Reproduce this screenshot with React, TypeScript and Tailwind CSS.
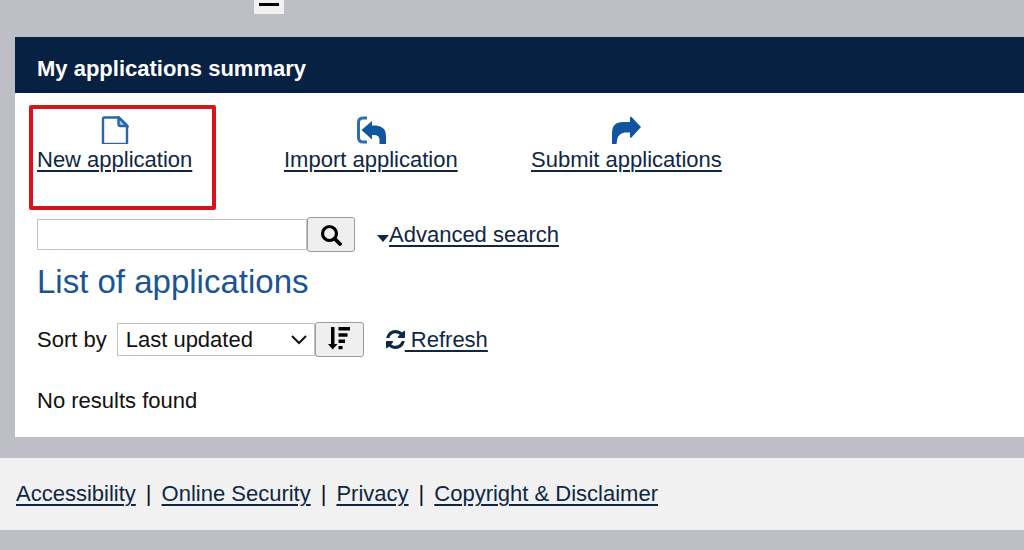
import React from 'react';

const linkClass = 'text-[#0f2744] underline decoration-2 underline-offset-[3px]';

const PageIcon = () => (
  <svg viewBox="0 0 28 28" className="h-7 w-7" fill="none" stroke="#2766ad" strokeWidth="2.4" aria-hidden="true">
    <path d="M2 28V3Q2 1.500 3.500 1.500H18L26 9.500V28" />
    <path d="M17.500 1.500V8Q17.500 10 19.500 10H26Z" fill="#a9cbe8" />
    <path d="M1 27.400H27" strokeWidth="1.200" />
  </svg>
);

const ImportIcon = () => (
  <svg viewBox="0 0 30 28" className="h-7 w-[30px]" aria-hidden="true">
    <path d="M11 2H7Q2.500 2 2.500 6.500V21.500Q2.500 26 7 26H11" fill="none" stroke="#2f6db2" strokeWidth="3" />
    <path d="M5.500 14L16 5V9.500H20Q30 10.500 30 20V28H23.500V24Q23.500 19 18 19H16V23.500Z" fill="#0f559f" />
  </svg>
);

const SubmitIcon = () => (
  <svg viewBox="0 0 30 28" className="h-7 w-[30px]" aria-hidden="true">
    <path d="M30 11L20.500 1Q19 0 19 2V6H12Q1 6 1 17V28H5.500Q6 17 14 16.500H19V20.500Q19 22.500 20.500 21.500Z" fill="#0f559f" />
  </svg>
);

const SearchIcon = () => (
  <svg viewBox="0 0 22 22" className="h-[22px] w-[22px]" fill="none" stroke="#000" strokeWidth="3.200" aria-hidden="true">
    <circle cx="9.500" cy="9.500" r="7" />
    <path d="M14.500 14.500L20 20" strokeWidth="3.800" strokeLinecap="round" />
  </svg>
);

const RefreshIcon = () => (
  <svg viewBox="0 0 1536 1536" className="inline h-[19px] w-[19px] align-[-2px]" fill="currentColor" aria-hidden="true">
    <path d="M1511 928q0 5-1 7-64 268-268 434.500t-478 166.500q-146 0-282.500-55t-243.500-157l-129 129q-19 19-45 19t-45-19-19-45v-448q0-26 19-45t45-19h448q26 0 45 19t19 45-19 45l-137 137q71 66 161 102t187 36q134 0 250-65t186-179q11-17 53-117 8-23 30-23h192q13 0 22.500 9.500t9.500 22.500zm25-800v448q0 26-19 45t-45 19h-448q-26 0-45-19t-19-45 19-45l138-138q-148-137-349-137-134 0-250 65t-186 179q-11 17-53 117-8 23-30 23h-199q-13 0-22.500-9.500t-9.500-22.500v-7q65-268 270-434.500t480-166.500q146 0 284 55.500t245 156.500l130-129q19-19 45-19t45 19 19 45z" />
  </svg>
);

const SortIcon = () => (
  <svg viewBox="0 0 24 24" className="mb-1 h-6 w-6" aria-hidden="true">
    <path d="M4 1H7.500V18H10.500L5.700 23.500L1 18H4ZM11.500 1H23V4.500H11.500ZM11.500 7.300H20.500V10.800H11.500ZM11.500 13.600H18V17H11.500ZM11.500 20H15.500V23.300H11.500Z" />
  </svg>
);

const actions = [
  { label: 'New application', icon: <PageIcon />, highlighted: true },
  { label: 'Import application', icon: <ImportIcon /> },
  { label: 'Submit applications', icon: <SubmitIcon /> },
];

const footerLinks = ['Accessibility', 'Online Security', 'Privacy', 'Copyright & Disclaimer'];

const App = () => {
  return (
    <div className="min-h-screen bg-[#bebec6] font-['Liberation_Sans',Arial,sans-serif] text-[22px] leading-7 text-[#111]">
      <div className="h-[37px] pl-[254px]">
        <button type="button" aria-label="Menu" className="flex h-3.5 w-[30px] justify-center bg-[#f1f1f1] pt-[3px]">
          <span className="h-[3px] w-5 bg-black" />
        </button>
      </div>

      <main className="ml-[15px] bg-white pb-[22px]">
        <h1 className="bg-[#072142] px-[22px] pt-[18px] pb-2.5 font-bold text-white">My applications summary</h1>

        <div className="px-[22px]">
          <nav className="flex pt-[23px]">
            {actions.map((action) => (
              <div key={action.label} className="relative w-[247px]">
                <a href="#" className={`inline-flex flex-col items-center whitespace-nowrap ${linkClass}`}>
                  {action.icon}
                  <span className="leading-8">{action.label}</span>
                </a>
                {action.highlighted && (
                  <span className="pointer-events-none absolute -top-[11px] -left-2 h-[105px] w-[187px] rounded-xs border-4 border-[#d8141b]" />
                )}
              </div>
            ))}
          </nav>

          <form className="mt-[41px] flex items-center" onSubmit={(e) => e.preventDefault()}>
            <input type="text" aria-label="Search applications" className="h-[31px] w-[270px] border border-[#c4c4c4] px-2 outline-none" />
            <button type="submit" aria-label="Search" className="flex h-[35px] w-12 items-center justify-center rounded-[3px] border border-[#9a9a9a] bg-[#efefef]">
              <SearchIcon />
            </button>
            <a href="#" className="ml-[22px] flex items-center text-[#0f2744]">
              <svg viewBox="0 0 12 7" className="mt-2 h-[7px] w-3" fill="#0f2744" aria-hidden="true">
                <path d="M0 0H12L6 7Z" />
              </svg>
              <span className={linkClass}>Advanced search</span>
            </a>
          </form>

          <h2 className="mt-2.5 text-[33px] leading-10 text-[#1a5494]">List of applications</h2>

          <div className="mt-5 flex items-center">
            <label htmlFor="sort">Sort by</label>
            <div className="relative ml-2.5">
              <select id="sort" className="block h-[33px] w-[198px] appearance-none border border-[#c4c4c4] bg-white pl-2 leading-7 outline-none">
                <option>Last updated</option>
              </select>
              <svg viewBox="0 0 16 10" className="pointer-events-none absolute top-3 right-2 h-2.5 w-4" fill="none" stroke="#111" strokeWidth="2" aria-hidden="true">
                <path d="M1 1L8 8L15 1" />
              </svg>
            </div>
            <button type="button" aria-label="Sort descending" className="flex h-[35px] w-[49px] items-center justify-center rounded-[3px] border border-[#9a9a9a] bg-[#efefef]">
              <SortIcon />
            </button>
            <a href="#" className={`ml-[22px] whitespace-pre ${linkClass}`}>
              <RefreshIcon /> Refresh
            </a>
          </div>

          <p className="mt-[30px]">No results found</p>
        </div>
      </main>

      <footer className="mt-[21px] flex flex-wrap bg-[#f1f1f1] px-4 py-[22px]">
        {footerLinks.map((label, i) => (
          <React.Fragment key={label}>
            {i > 0 && <span className="px-2.5">|</span>}
            <a href="#" className={linkClass}>{label}</a>
          </React.Fragment>
        ))}
      </footer>
    </div>
  );
};

export default App;
